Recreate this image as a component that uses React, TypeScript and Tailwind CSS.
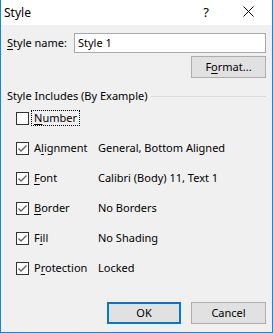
import React from "react";

const U = ({ children }: { children: React.ReactNode }) => (
  <span className="underline underline-offset-[2px] decoration-[1px]">{children}</span>
);

function Check({ checked }: { checked: boolean }) {
  return (
    <div className="w-[13px] h-[13px] border border-[#333333] bg-white shrink-0 flex items-center justify-center">
      {checked && (
        <svg width="11" height="11" viewBox="0 0 11 11">
          <polyline points="1.5,5.5 4,8 9.5,2.5" fill="none" stroke="#606060" strokeWidth="1.3" />
        </svg>
      )}
    </div>
  );
}

function Row({
  checked,
  label,
  value,
  focus,
}: {
  checked: boolean;
  label: React.ReactNode;
  value?: string;
  focus?: boolean;
}) {
  return (
    <div className="h-[30px] flex items-center pl-[15px]">
      <Check checked={checked} />
      <div className="w-[69px] shrink-0 flex">
        <span
          className={
            "ml-[2px] px-[2px] leading-[14px] border " +
            (focus ? "border-dotted border-black" : "border-transparent")
          }
        >
          {label}
        </span>
      </div>
      {value && <span className="leading-[14px]">{value}</span>}
    </div>
  );
}

export default function App() {
  return (
    <div className="w-[273px] h-[333px] flex flex-col border-x border-b border-[#1883d7] bg-[#f0f0f0] text-black text-[11px] font-['Noto_Sans',sans-serif]">
      <div className="h-[25px] bg-white flex items-center shrink-0">
        <span className="pl-[3px] text-[12px]">Style</span>
        <div className="flex-1" />
        <span className="text-[13px] mr-[34px]">?</span>
        <svg width="11" height="11" viewBox="0 0 11 11" className="mr-[18px] mt-[-2px]">
          <line x1="0.5" y1="0.5" x2="10.5" y2="10.5" stroke="#000" strokeWidth="1" />
          <line x1="10.5" y1="0.5" x2="0.5" y2="10.5" stroke="#000" strokeWidth="1" />
        </svg>
      </div>
      <div className="flex-1 flex flex-col">
        <div className="mt-[8px] flex items-center pl-[6px] pr-[6px]">
          <span>
            <U>S</U>tyle name:
          </span>
          <div className="flex-1" />
          <div className="w-[192px] h-[20px] border border-[#a9a9a9] bg-white flex items-center pl-[3px]">
            Style 1
          </div>
        </div>
        <div className="mt-[3px] flex justify-end pr-[6px]">
          <div className="w-[75px] h-[22px] border border-[#adadad] bg-[#e1e1e1] flex items-center justify-center">
            <span>
              F<U>o</U>rmat...
            </span>
          </div>
        </div>
        <div className="mt-[11px] h-[14px] flex items-center pl-[6px] pr-[6px]">
          <span className="leading-[14px]">Style Includes (By Example)</span>
          <div className="flex-1 ml-[4px] h-px bg-[#dcdcdc]" />
        </div>
        <Row checked={false} focus label={<><U>N</U>umber</>} />
        <Row checked label={<>A<U>l</U>ignment</>} value="General, Bottom Aligned" />
        <Row checked label={<><U>F</U>ont</>} value="Calibri (Body) 11, Text 1" />
        <Row checked label={<><U>B</U>order</>} value="No Borders" />
        <Row checked label={<>F<U>i</U>ll</>} value="No Shading" />
        <Row checked label={<>P<U>r</U>otection</>} value="Locked" />
        <div className="mt-auto mb-[8px] flex justify-end pr-[6px] gap-[10px]">
          <div className="w-[74px] h-[22px] border-2 border-[#0078d7] bg-[#e1e1e1] flex items-center justify-center">
            OK
          </div>
          <div className="w-[75px] h-[22px] border border-[#adadad] bg-[#e1e1e1] flex items-center justify-center">
            Cancel
          </div>
        </div>
      </div>
    </div>
  );
}
